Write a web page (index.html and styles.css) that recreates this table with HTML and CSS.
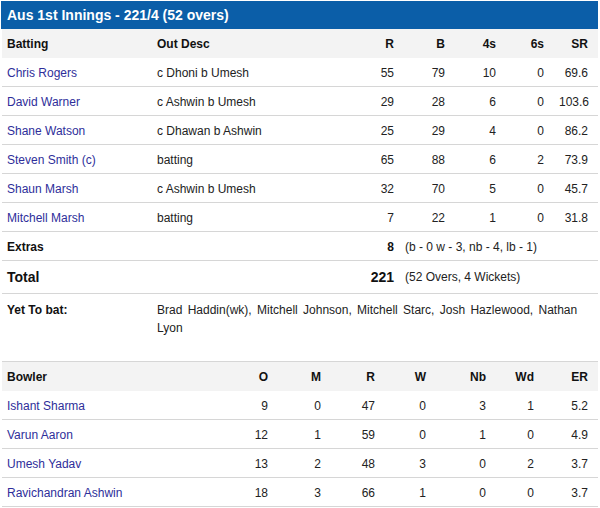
FILE: index.html
```html
<!DOCTYPE html>
<html>
<head>
<meta charset="utf-8">
<link rel="stylesheet" href="styles.css">
</head>
<body>
<div class="card">
  <div class="title">Aus 1st Innings - 221/4 (52 overs)</div>
  <table class="bat">
    <colgroup>
      <col class="c-name"><col class="c-desc"><col class="c-r"><col class="c-b"><col class="c-4"><col class="c-6"><col class="c-sr">
    </colgroup>
    <thead>
      <tr><th>Batting</th><th>Out Desc</th><th class="n">R</th><th class="n">B</th><th class="n">4s</th><th class="n">6s</th><th class="n">SR</th></tr>
    </thead>
    <tbody>
      <tr><td><a>Chris Rogers</a></td><td>c Dhoni b Umesh</td><td class="n">55</td><td class="n">79</td><td class="n">10</td><td class="n">0</td><td class="n">69.6</td></tr>
      <tr><td><a>David Warner</a></td><td>c Ashwin b Umesh</td><td class="n">29</td><td class="n">28</td><td class="n">6</td><td class="n">0</td><td class="n">103.6</td></tr>
      <tr><td><a>Shane Watson</a></td><td>c Dhawan b Ashwin</td><td class="n">25</td><td class="n">29</td><td class="n">4</td><td class="n">0</td><td class="n">86.2</td></tr>
      <tr><td><a>Steven Smith (c)</a></td><td>batting</td><td class="n">65</td><td class="n">88</td><td class="n">6</td><td class="n">2</td><td class="n">73.9</td></tr>
      <tr><td><a>Shaun Marsh</a></td><td>c Ashwin b Umesh</td><td class="n">32</td><td class="n">70</td><td class="n">5</td><td class="n">0</td><td class="n">45.7</td></tr>
      <tr><td><a>Mitchell Marsh</a></td><td>batting</td><td class="n">7</td><td class="n">22</td><td class="n">1</td><td class="n">0</td><td class="n">31.8</td></tr>
      <tr class="extras"><td class="b">Extras</td><td></td><td class="n b">8</td><td class="detail" colspan="4">(b - 0 w - 3, nb - 4, lb - 1)</td></tr>
      <tr class="total"><td class="b">Total</td><td></td><td class="n b">221</td><td class="detail" colspan="4">(52 Overs, 4 Wickets)</td></tr>
      <tr class="ytb"><td class="b">Yet To bat:</td><td class="ytb-list" colspan="6">Brad Haddin(wk), Mitchell Johnson, Mitchell Starc, Josh Hazlewood, Nathan Lyon</td></tr>
    </tbody>
  </table>
  <table class="bowl">
    <colgroup>
      <col class="b-name"><col class="b-o"><col class="b-m"><col class="b-r"><col class="b-w"><col class="b-nb"><col class="b-wd"><col class="b-er">
    </colgroup>
    <thead>
      <tr><th>Bowler</th><th class="n">O</th><th class="n">M</th><th class="n">R</th><th class="n">W</th><th class="n">Nb</th><th class="n">Wd</th><th class="n">ER</th></tr>
    </thead>
    <tbody>
      <tr><td><a>Ishant Sharma</a></td><td class="n">9</td><td class="n">0</td><td class="n">47</td><td class="n">0</td><td class="n">3</td><td class="n">1</td><td class="n">5.2</td></tr>
      <tr><td><a>Varun Aaron</a></td><td class="n">12</td><td class="n">1</td><td class="n">59</td><td class="n">0</td><td class="n">1</td><td class="n">0</td><td class="n">4.9</td></tr>
      <tr><td><a>Umesh Yadav</a></td><td class="n">13</td><td class="n">2</td><td class="n">48</td><td class="n">3</td><td class="n">0</td><td class="n">2</td><td class="n">3.7</td></tr>
      <tr><td><a>Ravichandran Ashwin</a></td><td class="n">18</td><td class="n">3</td><td class="n">66</td><td class="n">1</td><td class="n">0</td><td class="n">0</td><td class="n">3.7</td></tr>
    </tbody>
  </table>
</div>
</body>
</html>
```
FILE: styles.css
```css
html, body {
  margin: 0;
  padding: 0;
  background: #fff;
}
body {
  font-family: "Liberation Sans", Arial, sans-serif;
  font-size: 12px;
  color: #222;
}
.card {
  width: 597px;
  margin: 1px 0 0 1px;
}
.title {
  background: #0b5ea8;
  color: #fff;
  font-weight: bold;
  font-size: 14px;
  height: 28px;
  line-height: 28px;
  padding-left: 6px;
}
table {
  width: 596px;
  margin-left: 1px;
  border-collapse: collapse;
  table-layout: fixed;
}
th {
  background: #f3f3f3;
  color: #111;
  font-weight: bold;
  text-align: left;
  height: 29px;
  padding: 0 5px;
  line-height: 14px;
}
td {
  padding: 8px 5px 6px;
  line-height: 14px;
  border-bottom: 1px solid #d6d6d6;
  white-space: nowrap;
}
th.n, td.n {
  text-align: right;
  padding-right: 10px;
}
a {
  color: #2e2e9a;
  text-decoration: none;
}
.b {
  font-weight: bold;
  color: #111;
}
td.detail {
  padding-left: 1px;
}
.total td {
  padding-top: 9px;
  padding-bottom: 9px;
}
.total td.b {
  font-size: 14px;
}
.ytb td {
  border-bottom: none;
  white-space: normal;
  vertical-align: top;
  line-height: 18px;
  padding-top: 7px;
  padding-bottom: 8px;
}
.ytb td.ytb-list {
  word-spacing: 2px;
}
.c-name { width: 150px; }
.c-desc { width: 190px; }
.c-r { width: 62px; }
.c-b { width: 51px; }
.c-4 { width: 51px; }
.c-6 { width: 48px; }
.c-sr { width: 44px; }
.bowl {
  margin-top: 16px;
  border-top: 1px solid #d6d6d6;
}
.b-name { width: 215px; }
.b-o { width: 61px; }
.b-m { width: 53px; }
.b-r { width: 54px; }
.b-w { width: 51px; }
.b-nb { width: 60px; }
.b-wd { width: 48px; }
.b-er { width: 54px; }
```
